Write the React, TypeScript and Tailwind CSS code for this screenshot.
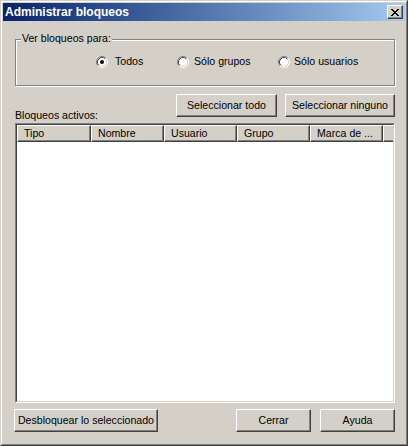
import React from "react";

const font = { fontFamily: '"Liberation Sans", Arial, sans-serif' };

function Radio({ checked }: { checked?: boolean }) {
  return (
    <svg width="12" height="12" viewBox="0 0 12 12" className="shrink-0">
      <circle cx="6" cy="6" r="5" fill="#ffffff" />
      <path d="M2.11 9.89 A5.5 5.5 0 0 1 9.89 2.11" fill="none" stroke="#808080" strokeWidth="1" />
      <path d="M9.89 2.11 A5.5 5.5 0 0 1 2.11 9.89" fill="none" stroke="#ffffff" strokeWidth="1" />
      <path d="M2.82 9.18 A4.5 4.5 0 0 1 9.18 2.82" fill="none" stroke="#404040" strokeWidth="1" />
      <path d="M9.18 2.82 A4.5 4.5 0 0 1 2.82 9.18" fill="none" stroke="#d4d0c8" strokeWidth="1" />
      {checked && <circle cx="6" cy="6" r="2" fill="#000000" />}
    </svg>
  );
}

function Button({ label, w }: { label: string; w: string }) {
  return (
    <div
      className={`${w} h-[23px] flex items-center justify-center bg-[#d4d0c8] border border-t-white border-l-white border-r-[#404040] border-b-[#404040] shadow-[inset_-1px_-1px_#808080] text-[10.6px] text-black leading-none whitespace-nowrap`}
    >
      {label}
    </div>
  );
}

function Header({ label, w }: { label: string; w: string }) {
  return (
    <div
      className={`${w} h-[17px] shrink-0 flex items-center pl-[6px] bg-[#d4d0c8] border border-t-white border-l-white border-r-[#404040] border-b-[#404040] shadow-[inset_-1px_-1px_#808080] text-[10.6px] leading-none whitespace-nowrap overflow-hidden`}
    >
      {label}
    </div>
  );
}

export default function App() {
  return (
    <div style={font} className="w-[408px] h-[446px] select-none">
      <div className="w-full h-full border border-t-[#d4d0c8] border-l-[#d4d0c8] border-r-[#404040] border-b-[#404040]">
        <div className="w-full h-full border border-t-white border-l-white border-r-[#808080] border-b-[#808080] bg-[#d4d0c8] p-[1px] flex flex-col">
          {/* Title bar */}
          <div className="h-[18px] shrink-0 flex items-center justify-between bg-gradient-to-r from-[#0a246a] to-[#a6caf0] pl-[2px] pr-[2px]">
            <span className="text-white font-bold text-[12px] leading-none">Administrar bloqueos</span>
            <div className="w-[16px] h-[14px] flex items-center justify-center bg-[#d4d0c8] border border-t-white border-l-white border-r-[#404040] border-b-[#404040] shadow-[inset_-1px_-1px_#808080]">
              <svg width="8" height="7" viewBox="0 0 8 7" shapeRendering="crispEdges">
                <path
                  d="M0 0h2v1h-2z M6 0h2v1h-2z M1 1h2v1h-2z M5 1h2v1h-2z M2 2h4v1h-4z M3 3h2v1h-2z M2 4h4v1h-4z M1 5h2v1h-2z M5 5h2v1h-2z M0 6h2v1h-2z M6 6h2v1h-2z"
                  fill="#000"
                />
              </svg>
            </div>
          </div>

          {/* Body */}
          <div className="flex-1 flex flex-col pl-[12px] text-black">
            {/* Group box */}
            <div className="relative mt-[18px] w-[380px] h-[47px] border border-[#808080] shadow-[inset_1px_1px_#ffffff,1px_1px_#ffffff]">
              <span className="absolute left-[5px] top-[-8px] px-[1px] bg-[#d4d0c8] text-[10.6px] leading-[13px]">
                Ver bloqueos para:
              </span>
              <div className="flex items-center mt-[15px] pl-[80px] h-[13px] text-[10.6px] leading-none">
                <div className="w-[81px] flex items-center gap-[7px]">
                  <Radio checked />
                  <span>Todos</span>
                </div>
                <div className="w-[101px] flex items-center gap-[5px]">
                  <Radio />
                  <span>Sólo grupos</span>
                </div>
                <div className="flex items-center gap-[4px]">
                  <Radio />
                  <span>Sólo usuarios</span>
                </div>
              </div>
            </div>

            {/* Buttons row + label */}
            <div className="mt-[8px] w-[380px] h-[29px] flex justify-between">
              <span className="self-end text-[10.6px] leading-[13px] mb-[1px]">Bloqueos activos:</span>
              <div className="flex gap-[8px] self-start">
                <Button label="Seleccionar todo" w="w-[101px]" />
                <Button label="Seleccionar ninguno" w="w-[110px]" />
              </div>
            </div>

            {/* List view */}
            <div className="w-[380px] h-[280px] border border-t-[#808080] border-l-[#808080] border-r-white border-b-white">
              <div className="w-full h-full border border-t-[#404040] border-l-[#404040] border-r-[#d4d0c8] border-b-[#d4d0c8] bg-white flex flex-col">
                <div className="flex h-[17px] overflow-hidden">
                  <Header label="Tipo" w="w-[74px]" />
                  <Header label="Nombre" w="w-[73px]" />
                  <Header label="Usuario" w="w-[73px]" />
                  <Header label="Grupo" w="w-[73px]" />
                  <Header label="Marca de ..." w="w-[73px]" />
                  <Header label="" w="w-[20px]" />
                </div>
              </div>
            </div>

            {/* Bottom buttons */}
            <div className="mt-[6px] w-[381px] -ml-[1px] flex items-center">
              <Button label="Desbloquear lo seleccionado" w="w-[144px]" />
              <div className="flex-1" />
              <div className="flex gap-[9px]">
                <Button label="Cerrar" w="w-[75px]" />
                <Button label="Ayuda" w="w-[75px]" />
              </div>
            </div>
          </div>
        </div>
      </div>
    </div>
  );
}
